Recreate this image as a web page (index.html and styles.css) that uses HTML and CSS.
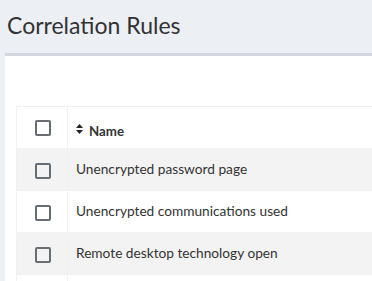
FILE: index.html
```html
<!DOCTYPE html>
<html>
<head>
<meta charset="utf-8">
<link rel="stylesheet" href="styles.css">
</head>
<body>
<div class="page">
  <h1 class="title">Correlation Rules</h1>
  <div class="card">
    <table class="grid">
      <thead>
        <tr>
          <th class="col-check"><span class="box"></span></th>
          <th class="col-name">
            <span class="sort"><svg width="7" height="10" viewBox="0 0 7 10"><path d="M3.5 0 L7 4 L0 4 Z M0 6 L7 6 L3.5 10 Z" fill="#222"/></svg></span>Name
          </th>
        </tr>
      </thead>
      <tbody>
        <tr class="odd"><td class="col-check"><span class="box"></span></td><td>Unencrypted password page</td></tr>
        <tr><td class="col-check"><span class="box"></span></td><td>Unencrypted communications used</td></tr>
        <tr class="odd"><td class="col-check"><span class="box"></span></td><td>Remote desktop technology open</td></tr>
        <tr><td class="col-check"><span class="box"></span></td><td>&nbsp;</td></tr>
      </tbody>
    </table>
  </div>
</div>
</body>
</html>
```
FILE: styles.css
```css
html, body {
  margin: 0;
  padding: 0;
  background: #ecf0f5;
  overflow: hidden;
}
body {
  width: 372px;
  height: 281px;
  font-family: "Lato", sans-serif;
  color: #333;
}
.page {
  padding: 10px 0 0 5px;
}
.title {
  margin: 0 0 0 2px;
  font-size: 23px;
  font-weight: 400;
  line-height: 30px;
  height: 43px;
  color: #333;
}
.card {
  background: #fff;
  border-top: 3px solid #d2d6de;
  padding: 50px 0 0 11px;
  height: 175px;
  overflow: hidden;
}
.grid {
  width: 420px;
  table-layout: fixed;
  border-collapse: collapse;
  font-size: 13.7px;
}
.grid th, .grid td {
  border: 1px solid #f1f1f1;
  height: 39px;
  padding: 0 8px 2px;
  text-align: left;
  vertical-align: middle;
  white-space: nowrap;
}
.grid th {
  font-weight: 700;
  font-size: 13.3px;
  padding-top: 6px;
  padding-bottom: 0;
  height: 35px;
}
.grid tr.odd td {
  background: #f3f3f3;
}
.grid .col-check {
  width: 50px;
  padding: 0;
  height: 41px;
  text-align: center;
}
.grid th.col-check { padding-top: 0; }
.box {
  display: inline-block;
  width: 12px;
  height: 12px;
  border: 2px solid #676d72;
  border-radius: 2px;
  vertical-align: middle;
  margin-left: 1px;
}
.sort {
  display: inline-block;
  margin-right: 6px;
  vertical-align: 2px;
}
.sort svg { display: block; }
```
